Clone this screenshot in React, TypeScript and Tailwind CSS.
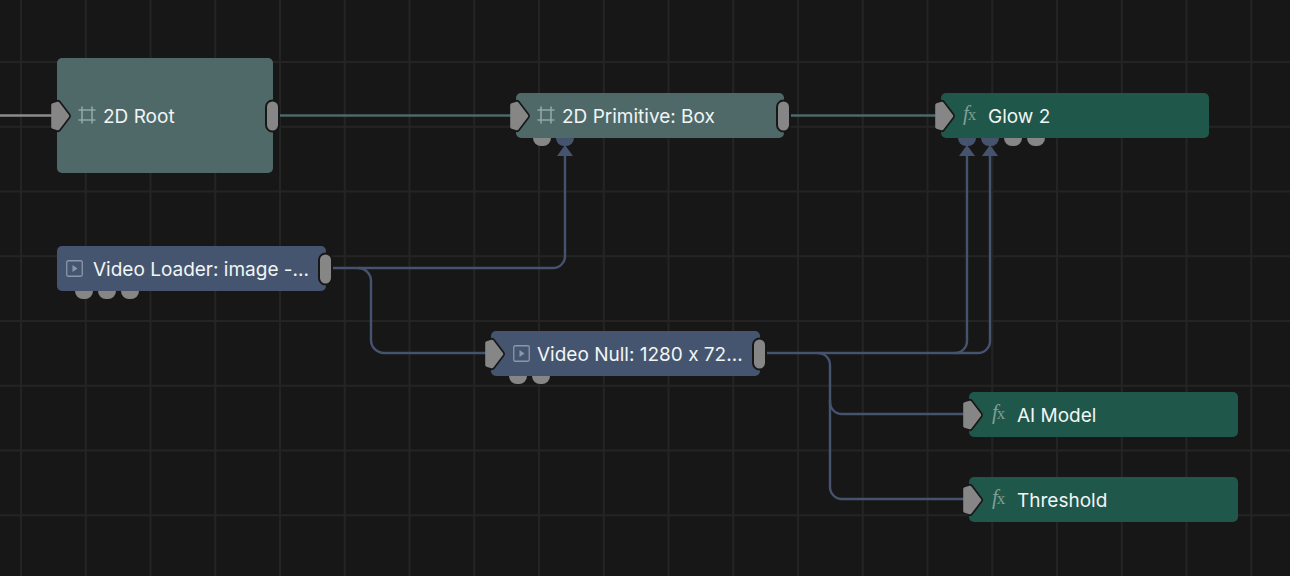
const wires = [
  { color: "#8c8c8c", d: "M0 115.5H54" },
  { color: "#4f6968", d: "M278 115.5H512" },
  { color: "#4f6968", d: "M788 115.5H938" },
  { color: "#46536e", d: "M330 268H553A12 12 0 0 0 565 256V152" },
  { color: "#46536e", d: "M358 268A13 13 0 0 1 371 281V340A13 13 0 0 0 384 353H488" },
  { color: "#46536e", d: "M764 353H955A12 12 0 0 0 967 341V152" },
  { color: "#46536e", d: "M955 353H978A12 12 0 0 0 990 341V152" },
  { color: "#46536e", d: "M818 353A12 12 0 0 1 830 365V402A12 12 0 0 0 842 414H966" },
  { color: "#46536e", d: "M830 400V487A12 12 0 0 0 842 499H966" },
];

const arrows = [565, 967, 990];

type Kind = "frame" | "video" | "fx";

const nodes: {
  label: string;
  kind: Kind;
  box: string;
  inner: string;
  out?: boolean;
  input?: boolean;
  bottom: string[];
  bottomLeft?: string;
}[] = [
  { label: "2D Root", kind: "frame", box: "left-[57px] top-[58px] w-[216px] h-[115px] bg-[#4f6968]", inner: "pl-[21px] gap-[7px]", input: true, out: true, bottom: [] },
  {
    label: "2D Primitive: Box",
    kind: "frame",
    box: "left-[516px] top-[93px] w-[268px] h-[45px] bg-[#4f6968]",
    inner: "pl-[21px] gap-[7px]",
    input: true,
    out: true,
    bottom: ["bg-[#868686]", "bg-[#46536e]"],
    bottomLeft: "left-[17px]",
  },
  {
    label: "Glow 2",
    kind: "fx",
    box: "left-[941px] top-[93px] w-[268px] h-[45px] bg-[#1f574a]",
    inner: "pl-[22px] gap-[10px]",
    input: true,
    bottom: ["bg-[#46536e]", "bg-[#46536e]", "bg-[#868686]", "bg-[#868686]"],
    bottomLeft: "left-[17px]",
  },
  {
    label: "Video Loader: image -...",
    kind: "video",
    box: "left-[57px] top-[246px] w-[269px] h-[45px] bg-[#46556f]",
    inner: "pl-[9px] gap-[10px]",
    out: true,
    bottom: ["bg-[#868686]", "bg-[#868686]", "bg-[#868686]"],
    bottomLeft: "left-[18px]",
  },
  {
    label: "Video Null: 1280 x 72...",
    kind: "video",
    box: "left-[491px] top-[331px] w-[269px] h-[45px] bg-[#46556f]",
    inner: "pl-[22px] gap-[7px]",
    input: true,
    out: true,
    bottom: ["bg-[#868686]", "bg-[#868686]"],
    bottomLeft: "left-[18px]",
  },
  { label: "AI Model", kind: "fx", box: "left-[969px] top-[392px] w-[269px] h-[45px] bg-[#1f574a]", inner: "pl-[23px] gap-[10px]", input: true, bottom: [] },
  { label: "Threshold", kind: "fx", box: "left-[969px] top-[477px] w-[269px] h-[45px] bg-[#1f574a]", inner: "pl-[23px] gap-[10px]", input: true, bottom: [] },
];

function NodeIcon({ kind }: { kind: Kind }) {
  if (kind === "frame") {
    return (
      <svg width="18" height="18" viewBox="0 0 18 18" fill="none" stroke="#8fa8a5" strokeWidth="1.6" className="shrink-0 -translate-y-[1px]">
        <path d="M0.5 4H17.5M0.5 14H17.5M4 0.5V17.5M14 0.5V17.5" />
      </svg>
    );
  }
  if (kind === "video") {
    return (
      <svg width="17" height="17" viewBox="0 0 17 17" fill="none" className="shrink-0">
        <rect x="0.75" y="0.75" width="15.5" height="15.5" rx="1.5" stroke="#8b97aa" strokeWidth="1.3" />
        <path d="M6.5 5L11.5 8.5L6.5 12Z" fill="#8b97aa" />
      </svg>
    );
  }
  return (
    <span className="w-[15px] shrink-0 -translate-y-[2px] whitespace-nowrap font-['Liberation_Serif',serif] text-[17px] leading-none tracking-[-1px] text-[#7f9f95]">
      <i className="text-[21px]">f</i>x
    </span>
  );
}

function InputPort() {
  return (
    <svg width="26" height="36" viewBox="0 0 26 36" className="absolute left-[-8px] top-1/2 -translate-y-1/2">
      <path d="M9 5.5L18.5 18L9 30.5" fill="none" stroke="#171717" strokeWidth="7" strokeLinejoin="round" strokeLinecap="round" />
      <path d="M4 7L9 5.5L18.5 18L9 30.5L4 29Z" fill="#868686" stroke="#868686" strokeWidth="3.6" strokeLinejoin="round" />
    </svg>
  );
}

function NodeCard({ node }: { node: (typeof nodes)[number] }) {
  return (
    <div className={`absolute rounded-[5px] ${node.box}`}>
      {node.bottom.length > 0 && (
        <div className={`absolute top-full flex gap-[5px] ${node.bottomLeft}`}>
          {node.bottom.map((color, i) => (
            <div key={i} className={`h-[8px] w-[18px] rounded-b-[9px] ${color}`} />
          ))}
        </div>
      )}
      {node.input && <InputPort />}
      <div className={`flex h-full items-center ${node.inner}`}>
        <NodeIcon kind={node.kind} />
        <span className="translate-y-[1px] whitespace-nowrap text-[19px] leading-none text-[#f1f5f5] [font-feature-settings:'calt'_0]">{node.label}</span>
      </div>
      {node.out && (
        <div className="absolute right-[-7px] top-1/2 h-[33px] w-[15px] -translate-y-1/2 rounded-[8px] border-2 border-[#171717] bg-[#868686]" />
      )}
    </div>
  );
}

export default function App() {
  return (
    <div className="relative h-[576px] w-[1290px] overflow-hidden bg-[#171717] bg-[linear-gradient(to_right,#242424_2px,transparent_2px),linear-gradient(to_bottom,#242424_2px,transparent_2px)] bg-[size:64.75px_64.75px] bg-[position:20px_61px] font-['Inter',sans-serif]">
      <svg width="1290" height="576" className="absolute inset-0" fill="none">
        {wires.map((wire, i) => (
          <path key={i} d={wire.d} stroke={wire.color} strokeWidth="2.4" />
        ))}
        {arrows.map((x) => (
          <path key={x} d={`M${x} 145L${x + 8} 156H${x - 8}Z`} fill="#46536e" />
        ))}
      </svg>
      {nodes.map((node) => (
        <NodeCard key={node.label} node={node} />
      ))}
    </div>
  );
}
